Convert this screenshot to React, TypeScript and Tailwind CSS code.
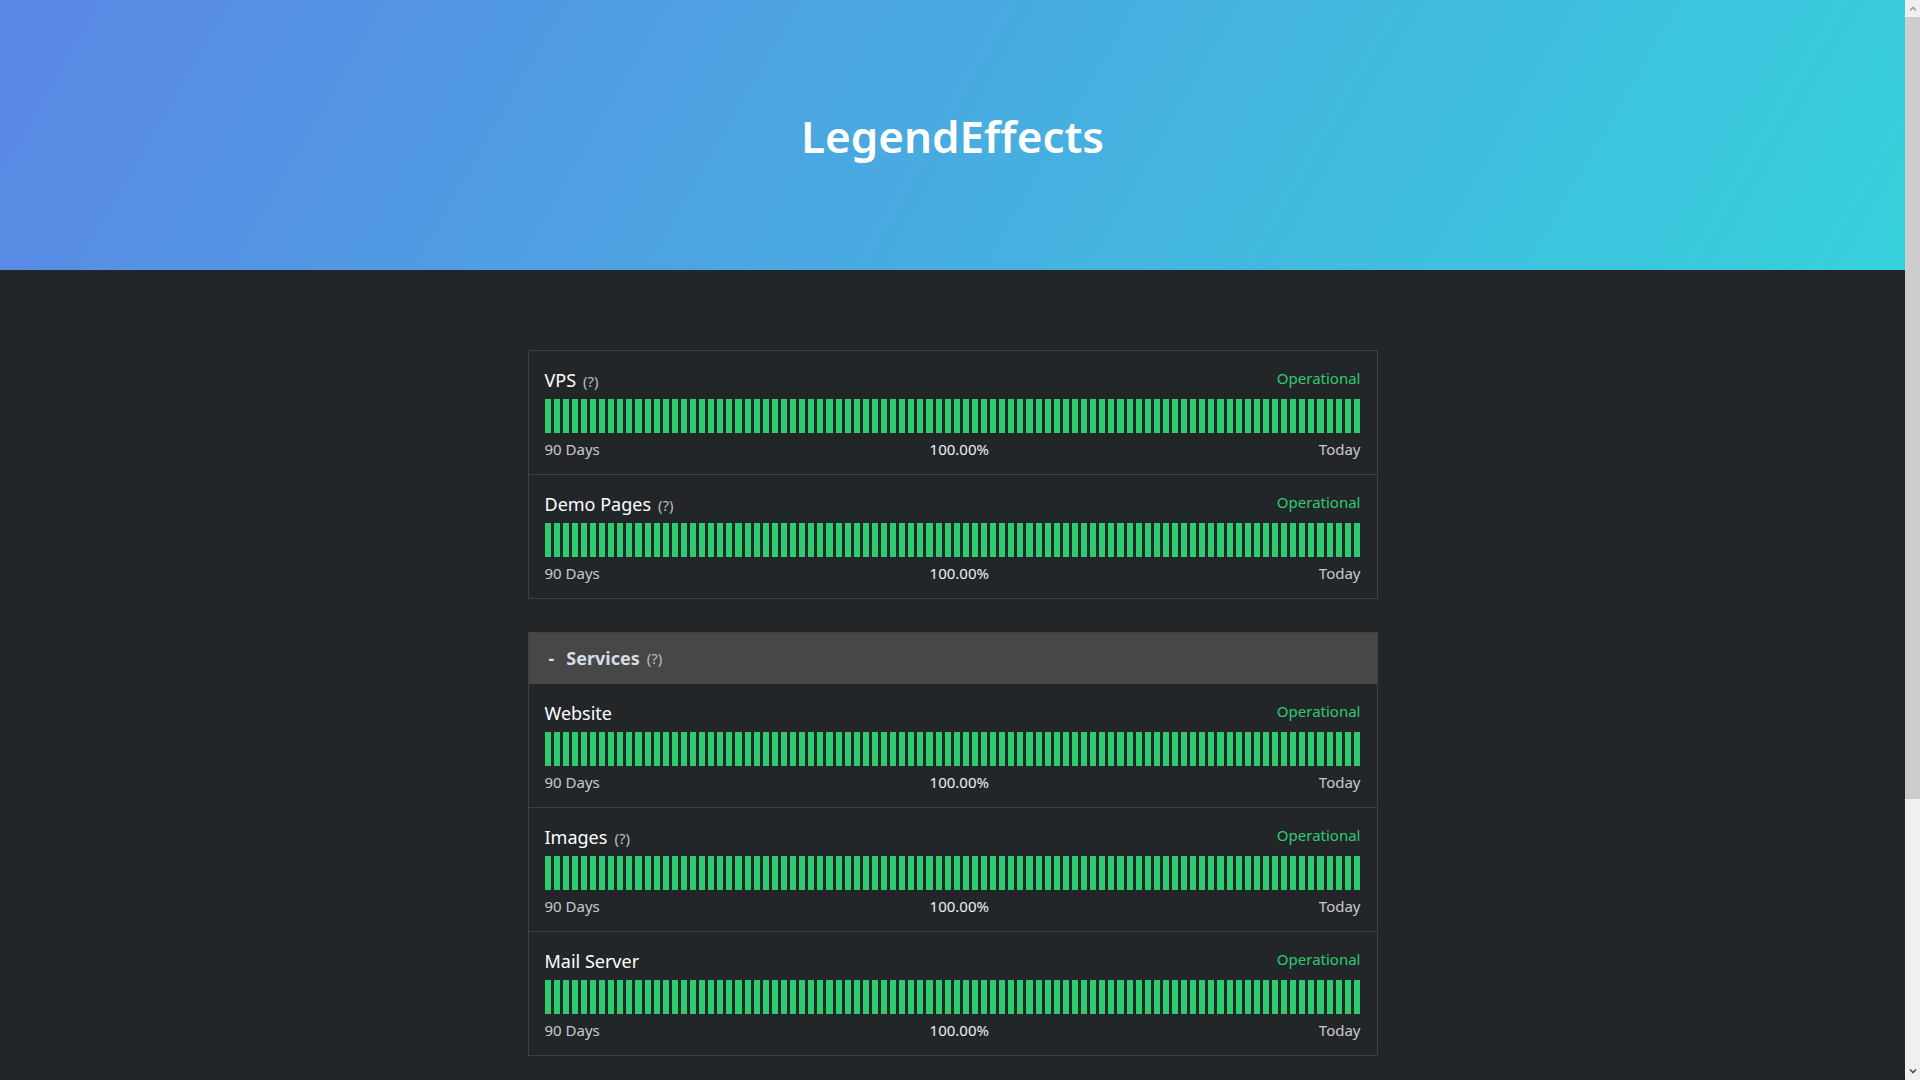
import React from 'react';

type Monitor = { name: string; hint?: boolean };

const topMonitors: Monitor[] = [
  { name: 'VPS', hint: true },
  { name: 'Demo Pages', hint: true },
];

const serviceMonitors: Monitor[] = [
  { name: 'Website' },
  { name: 'Images', hint: true },
  { name: 'Mail Server' },
];

const days = Array.from({ length: 90 }, (_, i) => i);

function MonitorRow({ monitor, first }: { monitor: Monitor; first?: boolean }) {
  return (
    <div className={`px-4 pt-4 pb-[14px] ${first ? '' : 'border-t border-[#3d4145]'}`}>
      <div className="flex items-start justify-between">
        <div className="text-[18px] leading-[27px] text-white">
          {monitor.name}
          {monitor.hint && <span className="ml-[7px] text-[15px] leading-none text-[#b9bcc0]">(?)</span>}
        </div>
        <div className="text-[15px] leading-[22px] text-[#2ecc71]">Operational</div>
      </div>
      <div className="mt-[5px] flex h-[34px] gap-[3px]">
        {days.map(d => (
          <div key={d} className="flex-1 bg-[#2ecc71]" />
        ))}
      </div>
      <div className="mt-[5px] flex justify-between text-[15px] leading-[22px] text-[#c8cbce]">
        <span>90 Days</span>
        <span className="text-[#eef0f2]">100.00%</span>
        <span>Today</span>
      </div>
    </div>
  );
}

// window scrollbar as it appears in the capture
function Scrollbar() {
  return (
    <aside className="flex w-[15px] shrink-0 flex-col bg-[#f0f0f0]">
      <div className="flex h-[17px] items-center justify-center">
        <svg width="8" height="5" viewBox="0 0 8 5">
          <polyline points="1,4.5 4,1.5 7,4.5" fill="none" stroke="#a3a3a3" strokeWidth="1.6" />
        </svg>
      </div>
      <div className="h-[782px] bg-[#cdcdcd]" />
      <div className="flex-1" />
      <div className="flex h-[17px] items-center justify-center">
        <svg width="8" height="5" viewBox="0 0 8 5">
          <polyline points="1,0.5 4,3.5 7,0.5" fill="none" stroke="#505050" strokeWidth="1.6" />
        </svg>
      </div>
    </aside>
  );
}

export default function App() {
  return (
    <div className="flex h-screen bg-[#222629] font-['Noto_Sans',sans-serif]">
      <div className="flex-1 overflow-y-auto">
        {/* Header */}
        <header className="flex h-[270px] items-center justify-center bg-[linear-gradient(120deg,#5b86e5,#36d1dc)]">
          <h1 className="mt-[2px] text-[44px] font-semibold text-white">LegendEffects</h1>
        </header>

        <main className="mx-auto w-[850px] pt-[80px] pb-[388px]">
          <section className="border border-[#3d4145]">
            {topMonitors.map((m, i) => (
              <MonitorRow key={m.name} monitor={m} first={i === 0} />
            ))}
          </section>

          <section className="mt-[33px] border border-[#3d4145]">
            <div className="flex h-[51px] items-center bg-[#474747] px-4 text-[#d6dde4]">
              <span className="ml-[4px] mr-[12px] text-[18px] font-bold">-</span>
              <span className="text-[18px] font-bold">Services</span>
              <span className="ml-[7px] text-[15px] text-[#b9bcc0]">(?)</span>
            </div>
            {serviceMonitors.map((m, i) => (
              <MonitorRow key={m.name} monitor={m} first={i === 0} />
            ))}
          </section>
        </main>
      </div>
      <Scrollbar />
    </div>
  );
}
